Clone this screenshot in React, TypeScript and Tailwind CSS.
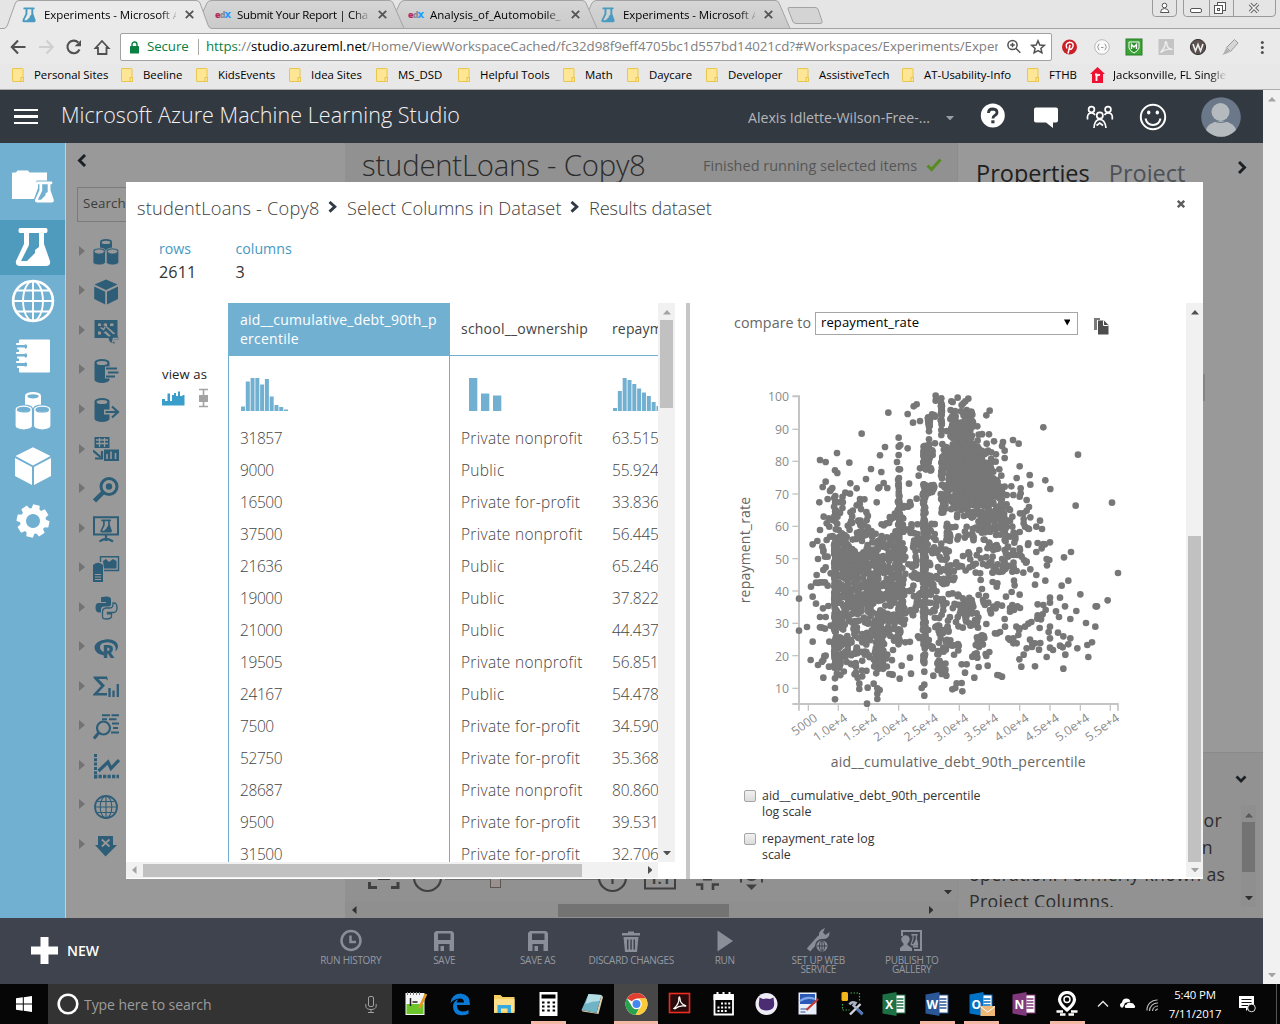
import React from "react";
import type { ReactNode } from "react";

type ArrowDir = "up" | "down" | "left" | "right";

const arrowPoints: Record<ArrowDir, string> = {
  up: "4,0 8,4.5 0,4.5",
  down: "0,0 8,0 4,4.5",
  left: "4.5,0 4.5,8 0,4",
  right: "0,0 4.5,4 0,8",
};

function Arrow({ dir, className }: { dir: ArrowDir; className: string }) {
  const vertical = dir === "up" || dir === "down";
  return (
    <svg width={vertical ? 8 : 4.5} height={vertical ? 4.5 : 8} className={"shrink-0 fill-current " + className}>
      <polygon points={arrowPoints[dir]} />
    </svg>
  );
}

function FlaskShape() {
  return (
    <path
      fillRule="evenodd"
      d="M5 0H31C33 0 33 5 31 5H29V16L35 33Q36 38 31 38H5Q0 38 1 33L9 16V5H5C3 5 3 0 5 0ZM14 5V17L6 33H12L20 25V22L24 19V5Z"
    />
  );
}

/* ---------- Browser chrome ---------- */

function TabFlask() {
  return (
    <svg width="14" height="16" viewBox="0 0 36 39" className="fill-[#4a9bc2]">
      <FlaskShape />
    </svg>
  );
}

function EdxMark() {
  return (
    <span className="flex w-4 text-[9px] leading-4 font-extrabold tracking-[-0.9px]">
      <span className="text-[#b52a67]">e</span>
      <span className="text-[#8a8d92]">d</span>
      <span className="text-[#1f9dff]">X</span>
    </span>
  );
}

const tabs = [
  { label: "Experiments - Microsoft A", icon: <TabFlask />, text: "tracking-[-0.08px]" },
  { label: "Submit Your Report | Cha", icon: <EdxMark />, text: "tracking-[-0.32px]" },
  { label: "Analysis_of_Automobile_I", icon: <EdxMark />, text: "tracking-[-0.02px]" },
  { label: "Experiments - Microsoft A", icon: <TabFlask />, text: "tracking-[-0.08px]" },
];

function TabStrip() {
  return (
    <div className="relative h-[29px] bg-[#e5e5e5]">
      <svg width="1280" height="29" className="absolute inset-0">
        <defs>
          <linearGradient id="tab" x1="0" y1="0" x2="0" y2="1">
            <stop offset="0" stopColor="#d6d6d6" />
            <stop offset="1" stopColor="#cacaca" />
          </linearGradient>
        </defs>
        <g fill="url(#tab)" stroke="#a3a3a3">
          <path d="M580 28.5L592 3Q593 .5 597 .5H775Q778 .5 779 3L790 28.5Z" />
          <path d="M388 28.5L400 3Q401 .5 405 .5H582Q585 .5 586 3L597 28.5Z" />
          <path d="M195 28.5L207 3Q208 .5 212 .5H389Q392 .5 393 3L404 28.5Z" />
          <path d="M789 7.500H815Q817 7.500 818 9L822 21Q823 23.500 820 23.500H797Q794 23.500 793 22L788 9Q788 7.500 789 7.500Z" fill="#d4d4d4" />
        </g>
        <path d="M0 28.500H1280" stroke="#a3a3a3" />
        <path d="M0 28.500H4Q6.500 28 7.500 25L15 4Q16 .5 19 .5H196Q199 .5 200 3L208 25Q209 28.500 212 28.500V29H0Z" fill="#eaeaea" />
        <path d="M0 28.500H4Q6.500 28 7.500 25L15 4Q16 .5 19 .5H196Q199 .5 200 3L208 25Q209 28.500 212 28.500" fill="none" stroke="#a3a3a3" />
      </svg>
      <div className="relative flex h-[29px] pl-[22px]">
        {tabs.map((t, i) => (
          <div key={i} className="flex w-[193px] items-center">
            <span className="flex w-[22px]">{t.icon}</span>
            <span
              className={
                "w-[132px] overflow-hidden text-[11.5px] whitespace-nowrap text-black [mask-image:linear-gradient(to_right,black_88%,transparent_102%)] " +
                t.text
              }
            >
              {t.label}
            </span>
            <svg width="9" height="9" viewBox="0 0 9 9" className="ml-[9px]" stroke="#555" strokeWidth="1.8">
              <path d="M.8 .8L8.200 8.200M8.200 .8L.8 8.200" />
            </svg>
          </div>
        ))}
      </div>
      <svg width="128" height="18" className="absolute top-0 right-0" fill="none" stroke="#9a9a9a">
        <path d="M.5 -1V13Q.5 16.500 3.500 16.500H21Q24.500 16.500 24.500 13V-1" />
        <path d="M31.500 -1V13Q31.500 16.500 34.500 16.500H120Q123.500 16.500 123.500 13V-1M57.500 0V16M81.500 0V16" />
        <g stroke="#555">
          <circle cx="12.500" cy="5.500" r="2.300" fill="#fff" />
          <path d="M8.500 12.500Q8.500 8.500 12.500 8.500T17 12.500Z" fill="#fff" />
          <rect x="38.500" y="8.500" width="11" height="4" rx="1.500" fill="#fff" />
          <rect x="65.500" y="2.500" width="8" height="8" fill="#fff" />
          <rect x="62.500" y="5.500" width="8" height="8" fill="#fff" />
          <rect x="65.500" y="8.500" width="2" height="2" />
          <path d="M98 4L106 12M106 4L98 12" strokeWidth="3.500" stroke="#666" />
          <path d="M98 4L106 12M106 4L98 12" strokeWidth="1.500" stroke="#f5f5f5" />
        </g>
      </svg>
    </div>
  );
}

function Toolbar() {
  return (
    <div className="flex h-[35px] items-center bg-[#eaeaea] pt-px">
      <svg width="120" height="28" viewBox="0 33 120 28" fill="none" strokeWidth="2.100" stroke="#505050">
        <path d="M25.500 47H12.500M18 40.500L11.800 47L18 53.500" />
        <path d="M39 47H52M46.500 40.500L52.700 47L46.500 53.500" stroke="#cfcfcf" />
        <path d="M79.500 49.500A6.300 6.300 0 1 1 78.300 42.500" />
        <path d="M81 40V46.300H74.700Z" fill="#505050" stroke="none" />
        <path d="M95.500 48L102 41L108.500 48H106.500V54H98V48Z" strokeWidth="1.800" />
      </svg>
      <div className="flex h-[28px] w-[932px] items-center rounded-[2px] border border-[#a2a2a2] bg-white">
        <svg width="9" height="13" className="ml-[9px]" fill="#0b8043">
          <rect x="0" y="5" width="9" height="7.500" rx=".6" />
          <path d="M2 5.500V3.500A2.500 2.500 0 0 1 7 3.500V5.500" fill="none" stroke="#0b8043" strokeWidth="1.400" />
        </svg>
        <span className="ml-[8px] w-[41px] text-[13.3px] tracking-[-0.1px] text-[#0b8043]">Secure</span>
        <span className="ml-[10px] h-4 w-px bg-[#a8a8a8]" />
        <span className="ml-[7px] w-[792px] overflow-hidden text-[13.3px] tracking-[-0.05px] whitespace-nowrap text-[#808080]">
          <span className="text-[#0b8043]">https</span>://<span className="text-black">studio.azureml.net</span>
          /Home/ViewWorkspaceCached/fc32d98f9eff4705bc1d557bd14021cd?#Workspaces/Experiments/Exper
        </span>
        <svg width="44" height="16" viewBox="0 0 44 16" className="ml-[8.500px]" fill="none" stroke="#505050" strokeWidth="1.500">
          <circle cx="5.500" cy="6" r="4.600" />
          <path d="M9 9.500L13.300 13.800M3.200 6H7.800M5.500 3.700V8.300" />
          <path d="M31 1.800L32.800 6L37.300 6.400L33.900 9.400L34.900 13.800L31 11.500L27.100 13.800L28.100 9.400L24.700 6.400L29.200 6Z" />
        </svg>
      </div>
      <svg width="228" height="28" viewBox="1052 33 228 28">
        <circle cx="1069.500" cy="47" r="7.500" fill="#cb2027" />
        <path d="M1068 53.500L1070 45M1067 48.500Q1064.500 43.500 1069.500 42.300Q1074 42.500 1073 46.500Q1071.500 50.500 1069.300 48.500" fill="none" stroke="#fff" strokeWidth="1.500" />
        <circle cx="1102" cy="47" r="7.300" fill="#fafafa" stroke="#b8b8b8" />
        <path d="M1099.500 44Q1098 44 1098.300 46L1097.500 47L1098.300 48Q1098 50 1099.500 50M1104.500 44Q1106 44 1105.700 46L1106.500 47L1105.700 48Q1106 50 1104.500 50M1101 47.500H1103.500" stroke="#999" fill="none" />
        <rect x="1126" y="39" width="16" height="16" fill="#3aa535" stroke="#2b7d2b" />
        <path d="M1129 42H1139V48Q1138 51 1134 53Q1130 51 1129 48Z" fill="#2c8f2c" stroke="#fff" />
        <path d="M1131.500 49V44.500L1134 47L1136.500 44.500V49" fill="none" stroke="#fff" strokeWidth="1.400" />
        <rect x="1158.500" y="39" width="15.500" height="16" fill="#c4c4c4" />
        <path d="M1160.500 52.500Q1165.500 47 1165.300 42.500Q1166.500 40.500 1166.800 43.500Q1166.500 48.500 1172.500 49.500Q1166.500 48 1160.500 52.500Z" fill="none" stroke="#f0f0f0" strokeWidth="1.300" />
        <circle cx="1198" cy="47" r="7.600" fill="#5a5150" stroke="#333" />
        <path d="M1193 44L1195.500 51L1198 44.500L1200.500 51L1203 44" fill="none" stroke="#eee" strokeWidth="1.600" />
        <path d="M1234.500 39.500L1238 43L1230.500 51.500L1226.500 47.500Z" fill="#d6d6d6" stroke="#999" />
        <path d="M1226 48L1230 52L1226.500 53.500L1222.500 55L1224.500 51.500Z" fill="#b0b0b0" />
        <g fill="#505050">
          <circle cx="1262.300" cy="42.500" r="1.500" />
          <circle cx="1262.300" cy="47.500" r="1.500" />
          <circle cx="1262.300" cy="52.500" r="1.500" />
        </g>
      </svg>
    </div>
  );
}

const bookmarks: [string, string][] = [
  ["Personal Sites", "w-[109px]"],
  ["Beeline", "w-[75px]"],
  ["KidsEvents", "w-[93px]"],
  ["Idea Sites", "w-[87px]"],
  ["MS_DSD", "w-[82px]"],
  ["Helpful Tools", "w-[105px]"],
  ["Math", "w-[64px]"],
  ["Daycare", "w-[79px]"],
  ["Developer", "w-[91px]"],
  ["AssistiveTech", "w-[105px]"],
  ["AT-Usability-Info", "w-[125px]"],
  ["FTHB", "w-[63px]"],
];

function Bookmarks() {
  return (
    <div className="flex h-[26px] items-center border-b border-[#acacac] bg-[#e8e8e8] pb-[3px] pl-[12px] text-[11.4px] whitespace-nowrap text-black">
      {bookmarks.map(([name, width]) => (
        <div key={name} className={"flex shrink-0 items-center gap-[10px] " + width}>
          <svg width="12" height="14">
            <rect x=".5" y=".5" width="10.500" height="13" rx=".5" fill="#ffe694" stroke="#e8c64f" />
            <rect x="9" y="9.500" width="2.500" height="4" fill="#ffe694" stroke="#e8c64f" />
          </svg>
          {name}
        </div>
      ))}
      <svg width="15" height="16" className="fill-[#ee1132]">
        <path d="M7.500 0L15 7H13V16H2V7H0Z" />
        <path d="M5 7.500H6.500V14M6.500 9.500Q7.500 7.500 10 8" fill="none" stroke="#fff" strokeWidth="1.800" />
      </svg>
      <span className="ml-[8px] w-[115px] overflow-hidden [mask-image:linear-gradient(to_right,black_85%,transparent_99%)]">
        Jacksonville, FL Single
      </span>
    </div>
  );
}

/* ---------- Studio header ---------- */

function StudioHeader() {
  return (
    <header className="flex h-[53px] items-center bg-[#333941] pl-[14px] whitespace-nowrap">
      <div className="flex w-[24px] flex-col gap-[4.500px]">
        <span className="h-[2.300px] bg-white" />
        <span className="h-[2.300px] bg-white" />
        <span className="h-[2.300px] bg-white" />
      </div>
      <h1 className="ml-[23px] w-[687px] pb-[3px] text-[21.500px] font-light tracking-[0.050px] text-[#f2f2f2]">
        Microsoft Azure Machine Learning Studio
      </h1>
      <span className="w-[198px] pt-[2px] text-[14.200px] tracking-[-0.020px] text-[#b3b6ba]">Alexis Idlette-Wilson-Free-...</span>
      <Arrow dir="down" className="mt-[3px] text-[#9a9da1]" />
      <svg width="290" height="44" viewBox="973 94 290 44" className="ml-auto" fill="none" stroke="#fff">
        <circle cx="992.800" cy="114.500" r="12" fill="#fff" stroke="none" />
        <path d="M988.500 112Q988.500 108 992.800 108Q997 108.200 997 111.500Q997 113.500 994.500 114.800Q993 115.700 993 117.500" stroke="#333941" strokeWidth="2.800" />
        <rect x="991.300" y="119.300" width="3.200" height="3" fill="#333941" stroke="none" />
        <path d="M1036 106.500H1056Q1058 106.500 1058 108.500V119.500Q1058 121.500 1056 121.500H1053V127L1046 121.500H1036Q1034 121.500 1034 119.500V108.500Q1034 106.500 1036 106.500Z" fill="#fff" stroke="none" />
        <g strokeWidth="1.700">
          <circle cx="1091.500" cy="108.500" r="2.900" />
          <circle cx="1108" cy="108.500" r="2.900" />
          <circle cx="1099.800" cy="114.500" r="3.100" />
          <path d="M1087.500 118.500V115.500Q1088 112 1091.500 112Q1094 112 1095 114M1112.300 118.500V115.500Q1112 112 1108 112Q1105.500 112 1104.500 114M1094 127Q1094.500 118.500 1099.800 118.500Q1105 118.500 1106 127" />
          <path d="M1096.500 124.500L1099.800 122L1103 124.500" />
        </g>
        <circle cx="1153" cy="116" r="12.200" strokeWidth="2" />
        <path d="M1145.500 117.500Q1147 124 1153 124Q1159 124 1160.500 117.500" strokeWidth="2" />
        <ellipse cx="1148.700" cy="111.500" rx="1.700" ry="2" fill="#fff" stroke="none" />
        <ellipse cx="1157.300" cy="111.500" rx="1.700" ry="2" fill="#fff" stroke="none" />
        <clipPath id="avatar">
          <circle cx="1221" cy="116" r="19.800" />
        </clipPath>
        <g clipPath="url(#avatar)" stroke="none">
          <rect x="1200" y="96" width="42" height="42" fill="#6a7889" />
          <circle cx="1220.500" cy="111" r="9" fill="#b5babf" />
          <ellipse cx="1221" cy="131.500" rx="15.500" ry="11.500" fill="#b5babf" />
          <path d="M1213 119Q1221 124 1228.500 119" stroke="#6a7889" strokeWidth="1.200" fill="none" />
        </g>
      </svg>
    </header>
  );
}

/* ---------- Left navigation ---------- */

function Drum({ x, y, w, h, hole }: { x: number; y: number; w: number; h: number; hole: string }) {
  const r = w / 2;
  const ry = r * 0.45;
  return (
    <g>
      <path d={`M${x} ${y + ry}A${r} ${ry} 0 0 1 ${x + w} ${y + ry}V${y + h - ry}A${r} ${ry} 0 0 1 ${x} ${y + h - ry}Z`} />
      <ellipse cx={x + r} cy={y + ry + 0.7} rx={r * 0.72} ry={ry * 0.6} fill={hole} />
    </g>
  );
}

function Globe({ size, stroke }: { size: number; stroke: number }) {
  return (
    <svg width={size} height={size} viewBox="0 0 42 42" fill="none" stroke="currentColor" strokeWidth={stroke}>
      <circle cx="21" cy="21" r="19" strokeWidth={stroke * 1.4} />
      <ellipse cx="21" cy="21" rx="9.500" ry="19" />
      <path d="M21 2V40M2 21H40M5.500 11H36.500M5.500 31H36.500" />
    </svg>
  );
}

const navBlue = "#72b0d2";

const navIcons: { name: string; box: string; icon: ReactNode }[] = [
  {
    name: "projects",
    box: "h-[77px] pt-[10px]",
    icon: (
      <svg width="44" height="34" className="fill-white">
        <path d="M1 3.500Q1 2.500 2 2.500H5L6.500 .5H17L18.500 2.500H36V10.500H25.500V13H27V18L23 29H1Z" />
        <g transform="translate(23.500 11.500) scale(.55)">
          <FlaskShape />
        </g>
      </svg>
    ),
  },
  {
    name: "experiments",
    box: "h-[55px] bg-[#4f9bbe]",
    icon: (
      <svg width="36" height="39" className="fill-white">
        <FlaskShape />
      </svg>
    ),
  },
  { name: "web services", box: "h-[52px]", icon: <Globe size={44} stroke={1.8} /> },
  {
    name: "notebooks",
    box: "h-[57px]",
    icon: (
      <svg width="36" height="34" className="fill-white">
        <rect x="4" y=".5" width="31" height="33" rx="1" />
        <g fill="none" stroke={navBlue} strokeWidth="4.500">
          <path d="M3 7.500H10M3 16.500H10M3 25.500H10" strokeLinecap="round" />
        </g>
        <g stroke="#fff" strokeWidth="2.200" strokeLinecap="round">
          <path d="M2 5H9M2 14H9M2 23H9M3 9.500H9M3 18.500H9M3 28H9" />
        </g>
      </svg>
    ),
  },
  {
    name: "datasets",
    box: "h-[54px]",
    icon: (
      <svg width="36" height="38" className="fill-white">
        <Drum x={10} y={0} w={16} h={18} hole={navBlue} />
        <g stroke={navBlue} strokeWidth="1.200">
          <Drum x={0} y={13} w={17.500} h={25} hole={navBlue} />
          <Drum x={18.500} y={13} w={17.500} h={25} hole={navBlue} />
        </g>
      </svg>
    ),
  },
  {
    name: "trained models",
    box: "h-[55px]",
    icon: (
      <svg width="36" height="38" className="fill-white">
        <path d="M18 .3L35.500 9L18 18.500L.5 9ZM0 11L17 20V38L0 29ZM36 11L19 20V38L36 29Z" />
      </svg>
    ),
  },
  {
    name: "settings",
    box: "h-[55px]",
    icon: (
      <svg width="34" height="34" viewBox="-17 -17 34 34" className="fill-white">
        {[0, 45, 90, 135, 180, 225, 270, 315].map((a) => (
          <path key={a} d="M-4.500 -9L-3.300 -16.300H3.300L4.500 -9Z" transform={`rotate(${a + 12})`} />
        ))}
        <path fillRule="evenodd" d="M0 -13A13 13 0 1 0 .01 -13ZM0 -7A7 7 0 1 1 -.01 -7Z" />
      </svg>
    ),
  },
];

function NavRail() {
  return (
    <nav className="flex w-[66px] shrink-0 flex-col border-r border-[#b7d3e2] bg-[#72b0d2] text-white">
      {navIcons.map((n) => (
        <div key={n.name} className={"flex shrink-0 items-center justify-center " + n.box}>
          {n.icon}
        </div>
      ))}
    </nav>
  );
}

/* ---------- Module palette ---------- */

const steel = "#2e5e77";
const dim = "#999999";

const paletteIcons: ReactNode[] = [
  <g>
    <Drum x={7} y={0} w={12} h={13} hole={dim} />
    <g stroke={dim} strokeWidth=".8">
      <Drum x={0} y={9} w={12.500} h={17} hole={dim} />
      <Drum x={13.300} y={9} w={12.500} h={17} hole={dim} />
    </g>
  </g>,
  <path d="M13 .5L24.500 5.500L13 11L1.500 5.500ZM1.200 7.500L12.200 12.800V25.500L1.200 20ZM25 7.500L14 12.800V25.500L25 20Z" />,
  <g>
    <path d="M1.500 2H24.500V20H1.500Z" />
    <path d="M5 5.500H8V8H5ZM11 5.500H14V8H11ZM17 5.500H20.500V8H17ZM5 13.500H8V16.500H5Z" fill={dim} />
    <path d="M9 8.500L20 18" stroke={dim} strokeWidth="6.500" />
    <path d="M9.500 8L20.500 18.500" stroke={steel} strokeWidth="3" />
    <circle cx="10" cy="11" r="3.300" />
    <path d="M7.500 9.500L10.500 11.500L12 9" stroke={dim} strokeWidth="1.500" fill="none" />
    <path d="M15.500 19Q15.500 25.500 22 25.500L20 21.500L25.500 21.500Q25.500 16.500 20.500 16Z" />
    <path d="M19.500 24.500L20.500 20.500L25 20.500" stroke={dim} strokeWidth="1.500" fill="none" />
  </g>,
  <g>
    <Drum x={1.500} y={1} w={15} h={24} hole={dim} />
    <path d="M12 10.500H24M12 14.500H26M12 18.500H22" stroke={dim} strokeWidth="4" />
    <path d="M13 10.500H24M15 14.500H25.500M13 18.500H22" stroke={steel} strokeWidth="2" />
  </g>,
  <g>
    <Drum x={1.500} y={1} w={15} h={24} hole={dim} />
    <path d="M11 15H24" stroke={dim} strokeWidth="5" />
    <path d="M12.500 15H24M19 9.500L25 15L19 20.500" stroke={steel} strokeWidth="2.200" fill="none" />
  </g>,
  <g>
    <path d="M1.500 0H16.500V11H1.500Z" />
    <path d="M3 3H15M3 6.500H15M6.500 1V10M11.500 1V10" stroke={dim} strokeWidth="1.300" />
    <path d="M0 13.500L7.500 20M9 14V21.500H2" stroke={steel} strokeWidth="2.200" fill="none" />
    <path d="M11 12.500H26V24H11Z" />
    <path d="M14 22V17M18 22V14.500M22.500 22V16" stroke={dim} strokeWidth="1.600" />
  </g>,
  <g>
    <circle cx="16" cy="9.500" r="8" fill="none" stroke={steel} strokeWidth="3" />
    <circle cx="16" cy="9.500" r="3.200" />
    <path d="M10 15.500L1.500 24" stroke={steel} strokeWidth="4.500" />
  </g>,
  <g>
    <path d="M1 1.200H25V18.500H1Z" fill="none" stroke={steel} strokeWidth="2" />
    <path d="M13 18V25M6.500 25.500Q13 20.500 20 25.500" stroke={steel} strokeWidth="2.200" fill="none" />
    <g transform="translate(7 3.500) scale(.34)">
      <FlaskShape />
    </g>
  </g>,
  <g>
    <path d="M7.500 6V.7H25.500V14.500H11" fill="none" stroke={steel} strokeWidth="1.400" />
    <path d="M10 5L13 3L16 6L20 3L23.500 5V12.500H11Z" />
    <path d="M0 9Q5 4.500 10 9V26H0Z" />
    <path d="M2 18.500H8M2 21H8M2 23.500H8" stroke={dim} strokeWidth="1.100" />
  </g>,
  <g>
    <path d="M8 3Q8 1.500 13 1.500Q18 1.500 18 4V9Q18 11.500 15 11.500H11Q8 11.500 8 14.500V17.500H5.500Q2.500 17 2.500 12.500T5.500 8H13V7H8Z" />
    <path d="M20 8H22Q24 9 24 13T21 17.500H14.500V18.800H18.500V21.500Q18 24 13.500 24T9.500 21.500V17Q9.500 13.500 13 13H16.500Q20 13 20 9.500Z" fill="none" stroke={steel} strokeWidth="1.300" />
  </g>,
  <g>
    <path fillRule="evenodd" d="M12.500 4.500C19 3.500 25 6.500 25 11.500Q25 14.500 22.500 16.500Q24 7.500 14.500 7.200Q7 7.500 7 12Q7 15.500 11 17V20.500Q1.500 18.500 1.500 12.500Q2 6 12.500 4.500Z" />
    <text x="9.500" y="22.500" fontSize="17" fontWeight="800" fontFamily="Open Sans">R</text>
  </g>,
  <g>
    <path d="M.5 2.500H14L15 6.500L13 5H5.500L12 11.500L5 19H14V21.500H0V20.500L8 12L.5 4Z" />
    <path d="M16.500 14V23M20.500 16.500V23M24.800 10V23" stroke={steel} strokeWidth="2.300" />
  </g>,
  <g>
    <circle cx="10.500" cy="14" r="6.500" fill="none" stroke={steel} strokeWidth="2.200" />
    <path d="M6 18.500L1 24.500" stroke={steel} strokeWidth="3" />
    <path d="M9 1.300H17M18.500 1.300H26M9 5.200H14M16 5.200H23.500M19 9.500H26M20 14H25M18 18.500H26" stroke={steel} strokeWidth="1.900" />
  </g>,
  <g>
    <path d="M2.500 1V26" stroke={steel} strokeWidth="3" strokeDasharray="3 1.300" />
    <path d="M1 23.500H26" stroke={steel} strokeWidth="3.500" strokeDasharray="3.300 1.200" />
    <path d="M5.500 18L15 9L18 15.500L26 7" stroke={steel} strokeWidth="3.200" fill="none" />
  </g>,
  <g fill="none" stroke={steel} strokeWidth="1.100">
    <circle cx="13" cy="14" r="11" strokeWidth="1.800" />
    <ellipse cx="13" cy="14" rx="5.800" ry="11" />
    <path d="M13 3V25M2 14H24M4.500 8.500H21.500M4.500 19.500H21.500" />
  </g>,
  <g>
    <path d="M5 4H20V13H24L12.500 24.500L2 13H5Z" />
    <path d="M8.800 7.500L16.500 14.500M16.500 7.500L8.800 14.500" stroke={dim} strokeWidth="1.700" />
  </g>,
];

function Palette() {
  return (
    <aside className="flex w-[279px] shrink-0 flex-col bg-[#999999]">
      <div className="flex h-[44px] pt-[11px] pl-[11px]">
        <svg width="10" height="13" fill="none" stroke="#1b2025" strokeWidth="2.900">
          <path d="M8 1L2.500 6.500L8 12" />
        </svg>
      </div>
      <div className="ml-[11px] flex h-[35px] w-[240px] items-center border border-[#7b7b7b] pb-[2px] pl-[5px] text-[13.300px] tracking-[0.100px] text-[#3c3c3c]">
        Search
      </div>
      <div className="mt-[11px] flex flex-col">
        {paletteIcons.map((icon, i) => (
          <div key={i} className="flex h-[39.550px] items-center pl-[13px]">
            <svg width="6" height="10" className="mb-[4px] fill-[#737373]">
              <path d="M0 0L6 5L0 10Z" />
            </svg>
            <svg width="27" height="27" className="ml-[8px] fill-[#2e5e77]">
              {icon}
            </svg>
          </div>
        ))}
      </div>
    </aside>
  );
}

/* ---------- Canvas and properties behind the dialog ---------- */

function ExperimentCanvas() {
  return (
    <main className="flex w-[612px] shrink-0 flex-col bg-[#919191]">
      <div className="flex h-[46px] items-center pl-[17px] whitespace-nowrap">
        <span className="w-[341px] text-[29.300px] font-light tracking-[-0.200px] text-[#2b2b2b]">studentLoans - Copy8</span>
        <span className="w-[223px] text-[14.500px] text-[#565656]">Finished running selected items</span>
        <svg width="16" height="14" className="mb-[2px]" fill="none" stroke="#588b20" strokeWidth="3">
          <path d="M1.500 7.500L5.500 11.500L14.500 1.500" />
        </svg>
      </div>
      <div className="mt-auto flex h-[39px] items-end justify-between pr-[5px]">
        <svg width="440" height="36" viewBox="345 866 440 36" fill="none" stroke="#404040">
          <path d="M369.500 882V887.500H377M391 887.500H398V882" strokeWidth="3" />
          <rect x="378" y="870" width="12" height="10" fill="#404040" stroke="none" />
          <circle cx="427.500" cy="877.500" r="13.500" strokeWidth="2.200" />
          <path d="M445 879.500H600" stroke="#6f6f6f" />
          <rect x="490.500" y="868" width="10" height="19.500" fill="#97928f" stroke="#5c5650" />
          <circle cx="612.500" cy="877.500" r="13.500" strokeWidth="2.200" />
          <path d="M612.500 870V884" strokeWidth="2.200" />
          <path d="M645 868V888.500H675V868" strokeWidth="2" />
          <text x="649" y="884" fontSize="15" fontWeight="700" fill="#404040" stroke="none">1:1</text>
          <path d="M696 884.500H702V890M719 884.500H713V890" strokeWidth="2.600" />
          <rect x="703" y="870" width="9" height="10.500" fill="#404040" stroke="none" />
          <path d="M741 879V882.500M762 879V882.500" strokeWidth="2" />
          <circle cx="751.500" cy="874" r="6" strokeWidth="2" />
          <path d="M746 884.500H757L751.500 890Z" fill="#404040" stroke="none" />
        </svg>
        <Arrow dir="down" className="mb-[8px] text-[#303030]" />
      </div>
      <div className="flex h-[16px] items-center bg-[#8f8f8f] pr-[24px] pl-[7px]">
        <Arrow dir="left" className="text-[#303030]" />
        <div className="ml-[201px] h-[13px] w-[171px] bg-[#737373]" />
        <Arrow dir="right" className="ml-auto text-[#303030]" />
      </div>
    </main>
  );
}

function PropertiesPanel() {
  return (
    <aside className="flex min-w-0 flex-1 flex-col border-l border-[#8d8d8d] bg-[#999999]">
      <div className="flex h-[60px] items-center justify-between pr-[16px] pl-[18px]">
        <div className="flex gap-[19px] pt-[2px] text-[23.500px] whitespace-nowrap">
          <span className="text-[#202020]">Properties</span>
          <span className="text-[#4c5157]">Project</span>
        </div>
        <svg width="9" height="13" className="mb-[11px]" fill="none" stroke="#1b2025" strokeWidth="2.900">
          <path d="M1 1L6.500 6.500L1 12" />
        </svg>
      </div>
      <div className="mt-[171px] mr-[58px] h-[27px] self-end bg-[#868686] pr-[2px]">
        <div className="h-full w-px bg-[#777]" />
      </div>
      <div className="mt-auto flex h-[166px] flex-col border-t border-[#8a8a8a] bg-[#929292] pb-[9px]">
        <div className="flex h-[52px] items-center justify-end pr-[16px] pb-px">
          <svg width="12" height="8" fill="none" stroke="#1b2025" strokeWidth="2.700">
            <path d="M1.500 1.500L6 6L10.500 1.500" />
          </svg>
        </div>
        <div className="flex h-[102px] items-start justify-between">
          <p className="mt-[2px] h-[100px] w-[272px] overflow-hidden pl-[11px] text-[17.700px] leading-[27px] tracking-[0.350px] whitespace-nowrap text-[#2d2d2d]">
            <span className="block w-[253px] text-right">Selects columns to include or</span>
            <span className="block w-[244px] text-right">exclude from a dataset in an</span>
            operation. Formerly known as
            <br />
            Project Columns.
          </p>
          <div className="mr-[7px] flex h-full w-[15px] flex-col items-center bg-[#8f8f8f] pt-[8px] pb-[7px]">
            <Arrow dir="up" className="text-[#595959]" />
            <div className="mt-[4px] h-[50px] w-[13px] bg-[#737373]" />
            <Arrow dir="down" className="mt-auto text-[#303030]" />
          </div>
        </div>
      </div>
    </aside>
  );
}

/* ---------- Results dialog ---------- */

const rows: [string, string, string][] = [
  ["31857", "Private nonprofit", "63.515"],
  ["9000", "Public", "55.924"],
  ["16500", "Private for-profit", "33.836"],
  ["37500", "Private nonprofit", "56.445"],
  ["21636", "Public", "65.246"],
  ["19000", "Public", "37.822"],
  ["21000", "Public", "44.437"],
  ["19505", "Private nonprofit", "56.851"],
  ["24167", "Public", "54.478"],
  ["7500", "Private for-profit", "34.590"],
  ["52750", "Private for-profit", "35.368"],
  ["28687", "Private nonprofit", "80.860"],
  ["9500", "Private for-profit", "39.531"],
  ["31500", "Private for-profit", "32.706"],
];

function Histogram({ heights, bar, step }: { heights: number[]; bar: number; step: number }) {
  return (
    <svg width={step * heights.length} height="33" className="fill-[#72b0d2]">
      {heights.map((h, i) => (
        <rect key={i} x={i * step} y={33 - h} width={bar} height={h} />
      ))}
    </svg>
  );
}

function DataTable() {
  return (
    <div className="flex w-[430px] overflow-hidden text-[15.500px] whitespace-nowrap text-[#444]">
      <div className="w-[222px] shrink-0 border-x border-[#72b0d2]">
        <div className="-mx-px h-[53px] bg-[#72b0d2] pt-[7px] pl-[12px] text-[14px] leading-[19px] tracking-[0.240px] text-white">
          aid__cumulative_debt_90th_p
          <br />
          ercentile
        </div>
        <div className="h-[66px] pt-[22px] pl-[12px]">
          <Histogram heights={[4.5, 29.5, 33, 33, 26.5, 32, 14.5, 6, 4, 1.5]} bar={4} step={4.78} />
        </div>
        {rows.map((r, i) => (
          <div key={i} className="h-[32px] pl-[11px] leading-[32px] font-light tracking-[-0.400px]">
            {r[0]}
          </div>
        ))}
      </div>
      <div className="w-[151px] shrink-0">
        <div className="h-[53px] border-b border-[#72b0d2] pl-[11px] text-[14px] leading-[52px] tracking-[0.220px]">school__ownership</div>
        <div className="h-[66px] pt-[22px] pl-[19px]">
          <Histogram heights={[33, 17.5, 15.5]} bar={8.300} step={12} />
        </div>
        {rows.map((r, i) => (
          <div key={i} className="h-[32px] pl-[11px] leading-[32px] font-light tracking-[0.290px]">
            {r[1]}
          </div>
        ))}
      </div>
      <div className="w-[151px] shrink-0">
        <div className="h-[53px] border-b border-[#72b0d2] pl-[11px] text-[14px] leading-[52px] tracking-[0.150px]">repayment_rate</div>
        <div className="h-[66px] pt-[22px] pl-[12px]">
          <Histogram heights={[3, 20, 33, 31, 27, 22.500, 18.500, 15, 9, 5]} bar={4} step={4.83} />
        </div>
        {rows.map((r, i) => (
          <div key={i} className="h-[32px] pl-[11px] leading-[32px] font-light tracking-[-0.200px]">
            {r[2]}
          </div>
        ))}
      </div>
    </div>
  );
}

/* Individual observations away from the dense groups, in plot units. */
const sparse: number[] = [
  629,92,619,106,627,163,642,184,699,180,716,191,669,186,666,198,674,212,674,234,620,191,634,217,648,223,647,245,658,268,664,287,
  790,142,894,224,749,285,719,259,710,294,796,301,811,327,751,314,722,325,722,340,719,350,887,377,996,368,740,360,747,381,740,392,751,412,780,422,
  786,447,769,440,743,445,730,400,720,400,719,456,735,440,747,447,731,417,731,430,810,487,873,516,852,532,795,493,773,489,785,505,790,492,769,516,800,537,808,540,801,556,1014,579,
  769,585,765,614,796,602,865,602,845,617,751,568,730,578,719,644,695,636,704,616,702,602,901,643,983,661,840,653,810,653,855,679,
  828,694,837,711,871,717,889,693,947,679,951,679,918,729,946,740,936,787,922,795,925,831,892,805,871,775,850,769,834,758,856,824,
  850,866,819,810,800,831,777,809,781,789,765,859,731,824,718,838,724,860,720,684,797,690,790,675,773,673,810,668,779,744,810,740,806,756,
  810,775,810,803,754,726,745,731,735,740,709,740,719,745,865,793,840,797,848,802,756,801,740,805,757,790,750,779,765,790,715,765,717,750,700,790,710,790,685,775,
  690,780,700,775,773,706,788,703,783,718,772,716,782,708,712,679,697,675,690,695,690,684,674,717,675,740,660,756,645,760,652,760,652,885,666,890,657,886,
  623,857,596,861,583,893,628,816,619,828,617,822,592,833,584,822,577,830,590,820,547,934,545,909,530,910,517,928,526,924,545,853,560,853,555,878,
  433,947,433,914,425,924,433,875,393,881,390,833,460,887,499,887,359,896,334,883,328,882,338,884,365,857,339,810,261,971,292,957,292,941,
  299,930,292,925,281,911,263,923,238,927,238,911,233,893,165,924,165,958,165,895,130,893,147,860,114,855,92,840,133,828,137,827,126,845,130,840,98,785,81,741,
  57,752,57,656,93,620,98,650,108,671,129,685,145,678,120,711,137,711,120,742,126,743,135,746,148,785,152,737,110,585,108,608,114,609,120,607,114,537,98,493,112,483,120,450,
  131,410,118,367,128,321,137,305,143,357,150,333,157,324,152,330,120,240,137,246,165,271,172,279,171,219,208,248,245,161,325,98,399,128,
  383,102,401,79,410,73,420,123,383,205,356,173,356,200,361,195,356,225,351,246,360,268,356,268,315,201,300,226,273,267,304,276,258,297,
  311,309,322,324,295,325,298,322,211,310,230,325,210,341,196,338,240,357,230,376,387,311,416,287,420,265,410,356,390,366,385,380,378,380,392,375,467,47,467,62,
  484,55,484,70,533,53,514,64,518,66,565,56,556,64,550,70,545,75,560,90,575,97,577,104,573,95,556,113,548,128,456,103,465,110,462,105,592,139,447,154,447,178,465,190,
  500,153,484,150,484,165,127,500,130,515,135,530,143,530,130,510,137,562,130,570,152,580,143,617,128,607,135,607,148,440,140,430,146,415,157,420,140,480,150,470,158,468,
  702,690,720,525,725,530,740,545,732,540,744,495,745,490,719,505,720,510,738,548,706,470,703,488,706,478,697,560,697,575,703,570,710,573,675,567,647,568,
  674,320,694,319,700,345,680,345,672,400,690,390,697,410,690,423,697,440,680,440,672,455,660,440,674,480,690,470,684,500,674,510,684,530,674,545,700,512,710,525,
  630,265,640,275,650,300,660,320,668,340,655,330,645,310,640,295,650,350,665,370,678,380,660,395,650,380,640,420,655,410,630,450,648,465,625,440,
  628,490,640,510,638,530,628,549,640,560,650,495,668,560,
  596,645,618,648,609,660,652,673,640,680,630,690,678,650,666,677,619,732,594,743,606,627,602,600,638,606,652,610,650,620,615,675,625,668,633,700,
  647,685,611,668,575,660,570,675,580,680,590,700,595,712,560,705,570,690,555,690,548,655,560,665,575,700,590,730,585,720,
];

function buildPoints(): [number, number][] {
  let seed = 20177;
  const rnd = () => {
    seed = (seed * 16807) % 2147483647;
    return seed / 2147483647;
  };
  const gauss = () => Math.sqrt(-2 * Math.log(rnd())) * Math.cos(6.28318 * rnd());
  const pts: [number, number][] = [];
  for (let i = 0; i < sparse.length; i += 2) pts.push([sparse[i], sparse[i + 1]]);

  const fill = (n: number, make: () => [number, number], keep: (x: number, y: number) => boolean) => {
    let made = 0;
    let guard = 0;
    while (made < n && guard++ < 20000) {
      const [x, y] = make();
      if (keep(x, y)) {
        pts.push([x, y]);
        made++;
      }
    }
  };
  const column = (n: number, x: number, y0: number, y1: number, w: number) =>
    fill(n, () => [x + (rnd() - 0.5) * w, y0 + rnd() * (y1 - y0)], () => true);

  fill(590, () => [162 + rnd() * 215, 600 + gauss() * 125], (x, y) => y > 350 && y < 862 && (x < 340 || y < 790));
  fill(120, () => [180 + rnd() * 180, 600 + gauss() * 75], (_x, y) => y > 490 && y < 740);
  fill(60, () => [170 + rnd() * 90, 760 + rnd() * 130], (_x, y) => y < 892);
  fill(36, () => [385 + rnd() * 40, 430 + rnd() * 170], () => true);
  fill(26, () => [385 + rnd() * 40, 600 + rnd() * 190], () => true);
  column(100, 165, 490, 868, 5);
  column(14, 165, 345, 490, 6);
  column(180, 433, 312, 800, 9);
  column(46, 434, 196, 275, 9);
  column(10, 433, 800, 850, 6);
  column(24, 447, 112, 140, 6);
  column(22, 450, 190, 275, 16);
  column(14, 452, 315, 340, 22);
  column(60, 357, 292, 795, 6);
  column(50, 298, 745, 882, 24);
  column(20, 484, 75, 135, 4);
  column(24, 486, 180, 400, 8);
  fill(
    540,
    () => {
      const y = 275 + gauss() * 105;
      return [548 + (y - 200) * 0.27 + gauss() * (22 + Math.max(0, y - 80) * 0.11), y];
    },
    (x, y) => y > 80 && y < 470 && x > 500 && x < 690 && x < 588 + (y - 100) * 0.36 && x > 510 + (y > 390 ? (y - 390) * 0.5 : 0),
  );
  fill(50, () => [486 + rnd() * 45, 200 + rnd() * 190], () => true);
  fill(50, () => [495 + rnd() * 130, 220 + rnd() * 160], (x, y) => x < 590 + (y - 200) * 0.3);
  fill(40, () => [545 + rnd() * 138, 340 + rnd() * 125], (x, y) => x < 588 + (y - 100) * 0.36);
  fill(66, () => [440 + rnd() * 75, 400 + rnd() * 270], () => true);
  fill(76, () => [500 + rnd() * 205, 440 + rnd() * 150], (x, y) => y < 640 - (x - 500) * 0.35);
  fill(66, () => [445 + rnd() * 150, 590 + rnd() * 150], (x, y) => !(x > 545 && y < 640));
  fill(36, () => [440 + rnd() * 110, 735 + rnd() * 95], () => true);
  fill(16, () => [470 + rnd() * 28, 840 + rnd() * 42], () => true);
  fill(12, () => [585 + rnd() * 30, 765 + rnd() * 45], () => true);
  return pts;
}

const points = buildPoints();
const yTicks = [48, 148, 244, 342, 439, 536, 633, 730, 827, 925];
const xTicks = [85, 175, 265, 356, 447, 538, 628, 719, 810, 901, 991];
const xLabels = ["5000", "1.0e+4", "1.5e+4", "2.0e+4", "2.5e+4", "3.0e+4", "3.5e+4", "4.0e+4", "4.5e+4", "5.0e+4", "5.5e+4"];

function ScatterPlot() {
  return (
    <svg width="400" height="395" className="font-['Open_Sans',sans-serif]">
      <g transform="translate(50 0) scale(.33333)" stroke="#c4c4c4" fill="none">
        <path d="M37 49H57V971M37 972H1014" strokeWidth="6" />
        <path d="M57 972V992M1014 969V992" strokeWidth="5" />
        {yTicks.slice(1).map((y) => (
          <path key={y} d={`M37 ${y}H57`} strokeWidth="4" />
        ))}
        {xTicks.map((x) => (
          <path key={x} d={`M${x} 972V992`} strokeWidth="4" />
        ))}
        <g fill="#777777" stroke="none">
          {points.map(([x, y], i) => (
            <circle key={i} cx={x} cy={y} r="10" />
          ))}
        </g>
      </g>
      <g fill="#8a8a8a" fontSize="12.300" textAnchor="end">
        {yTicks.map((y, i) => (
          <text key={y} x="59" y={y / 3 + 5}>
            {100 - i * 10}
          </text>
        ))}
        {xTicks.map((x, i) => (
          <text key={x} transform={`translate(${x / 3 + 60} 340) rotate(-35)`}>
            {xLabels[i]}
          </text>
        ))}
      </g>
      <g fill="#666" fontSize="14" textAnchor="middle">
        <text x="228.300" y="387" className="tracking-[0.230px]">
          aid__cumulative_debt_90th_percentile
        </text>
        <text transform="translate(19.500 170) rotate(-90)" className="tracking-[0.200px]">
          repayment_rate
        </text>
      </g>
    </svg>
  );
}

function Checkbox() {
  return <span className="mt-[2px] size-[12px] shrink-0 rounded-[2px] border border-[#a5a5a5] bg-linear-to-b from-[#f1f1f1] to-[#dcdcdc]" />;
}

function ComparePane() {
  return (
    <div className="flex min-w-0 flex-1 flex-col">
      <div className="flex h-[40px] items-center pl-[44.500px]">
        <span className="w-[81px] text-[14.300px] tracking-[0.050px] whitespace-nowrap text-[#666]">compare to</span>
        <div className="flex h-[23px] w-[263px] items-center justify-between border border-[#a6a6a6] pr-[7px] pl-[5px] text-[13px] tracking-[0.120px] text-black">
          repayment_rate
          <svg width="6.500" height="7" className="mb-[2px]">
            <path d="M0 .5H6.500L3.250 6.500Z" />
          </svg>
        </div>
        <svg width="15" height="18" className="mt-[6px] ml-[16px]">
          <path d="M0 1H6V3H3V13H0Z" fill="#7a7a7a" />
          <path d="M4 3.500H10L14.500 8V17.500H4Z" fill="#4d4d4d" />
          <path d="M9.500 3.500V8.500H14.500" fill="none" stroke="#fff" />
        </svg>
      </div>
      <div className="mt-[37px] flex h-[395px] pl-[40.500px]">
        <ScatterPlot />
      </div>
      <div className="flex flex-col gap-[11px] pt-[13px] pl-[54.500px] text-[12.400px] leading-[16px] text-[#333]">
        <label className="flex gap-[6px]">
          <Checkbox />
          <span>
            aid__cumulative_debt_90th_percentile
            <br />
            log scale
          </span>
        </label>
        <label className="flex gap-[6px]">
          <Checkbox />
          <span>
            repayment_rate log
            <br />
            scale
          </span>
        </label>
      </div>
    </div>
  );
}

function CrumbArrow() {
  return (
    <svg width="10" height="12" className="mt-[-3px] mr-[9px] ml-[8px]" fill="none" stroke="#303a42" strokeWidth="2.900">
      <path d="M1.500 1L6.800 5.800L1.500 10.600" />
    </svg>
  );
}

function ResultsDialog() {
  return (
    <section className="absolute top-[92px] left-[126px] flex h-[697px] w-[1077px] flex-col bg-white">
      <div className="flex h-[53px] items-center justify-between pr-[18px] pl-[11px] text-[18.200px] font-light whitespace-nowrap text-[#3c3c3c]">
        <div className="flex items-center">
          <span className="w-[183px] tracking-[0.200px]">studentLoans - Copy8</span>
          <CrumbArrow />
          <span className="w-[215px] tracking-[0.080px]">Select Columns in Dataset</span>
          <CrumbArrow />
          <span className="tracking-[-0.100px]">Results dataset</span>
        </div>
        <svg width="8" height="8" className="mb-[9px]" stroke="#5c5c5c" strokeWidth="2.300">
          <path d="M.8 .8L7.200 7.200M7.200 .8L.8 7.200" />
        </svg>
      </div>
      <div className="flex h-[68px] pt-[3px] pl-[33px]">
        <dl className="w-[76.500px]">
          <dt className="text-[14.200px] leading-[22px] text-[#4699c4]">rows</dt>
          <dd className="text-[16.200px] leading-[24px] tracking-[0.100px] text-[#333]">2611</dd>
        </dl>
        <dl>
          <dt className="text-[14.200px] leading-[22px] text-[#4699c4]">columns</dt>
          <dd className="text-[16.200px] leading-[24px] text-[#333]">3</dd>
        </dl>
      </div>
      <div className="flex h-[576px]">
        <div className="flex w-[549px] flex-col">
          <div className="flex h-[559px] overflow-hidden">
            <div className="w-[102px] pt-[61px] pl-[36px] text-[13.100px] leading-[20px] tracking-[0.120px] text-[#222]">
              view as
              <svg width="48" height="20" viewBox="162 388 48 20" className="mt-[4px]">
                <path d="M162 405.500V399H165V401H167.500V393.500H170V401H172V395H174V393H176V396H178V391.500H180V396H182.500V395H184.500V405.500Z" fill="#3a9ecb" />
                <path d="M199 389.500H208M199 406.500H208M203.500 389V407" stroke="#a3a3a3" strokeWidth="1.600" />
                <rect x="199" y="395" width="9" height="7" fill="#a3a3a3" />
              </svg>
            </div>
            <DataTable />
            <div className="flex w-[17px] flex-col items-center bg-[#f1f1f1] py-[7px]">
              <Arrow dir="up" className="text-[#a3a3a3]" />
              <div className="mt-[5.500px] h-[88px] w-[13px] bg-[#c1c1c1]" />
              <Arrow dir="down" className="mt-auto text-[#505050]" />
            </div>
          </div>
          <div className="flex h-[16px]">
            <div className="flex w-[532px] items-center bg-[#f1f1f1] pr-[6px] pl-[6px]">
              <Arrow dir="left" className="text-[#a3a3a3]" />
              <div className="ml-[6px] h-[13px] w-[439px] bg-[#c1c1c1]" />
              <Arrow dir="right" className="ml-auto text-[#505050]" />
            </div>
          </div>
        </div>
        <div className="ml-[11px] w-[3.500px] bg-[#c6c6c6]" />
        <ComparePane />
        <div className="mb-[2px] flex w-[17px] flex-col items-center bg-[#f1f1f1] pt-[7px] pb-[5px]">
          <Arrow dir="up" className="text-[#505050]" />
          <div className="mt-auto h-[326px] w-[13px] bg-[#c1c1c1]" />
          <Arrow dir="down" className="mt-[5.500px] text-[#a3a3a3]" />
        </div>
      </div>
    </section>
  );
}

/* ---------- Command bar ---------- */

const saveIcon = (
  <path fillRule="evenodd" d="M3 2H19L21 4V22H1V4ZM5 4.500V11H17.500V4.500ZM5.500 15V22H16.500V15ZM7.500 17H11V22H7.500Z" />
);

const commands: { label: ReactNode; icon: ReactNode }[] = [
  {
    label: "RUN HISTORY",
    icon: (
      <g fill="none" stroke="#898e97">
        <circle cx="11" cy="11.500" r="9.500" strokeWidth="2.500" />
        <path d="M10.500 6.500V13H16" strokeWidth="2.500" />
      </g>
    ),
  },
  { label: "SAVE", icon: saveIcon },
  { label: "SAVE AS", icon: saveIcon },
  {
    label: "DISCARD CHANGES",
    icon: (
      <path fillRule="evenodd" d="M8 2.500H14V4H20V6.500H2V4H8ZM3.500 8H18.500L17 23H5ZM7 10.500V20.500H8.500V10.500ZM10.300 10.500V20.500H11.800V10.500ZM13.500 10.500V20.500H15V10.500Z" />
    ),
  },
  { label: "RUN", icon: <path d="M3.500 1.500L19 12L3.500 22.500Z" /> },
  {
    label: (
      <>
        SET UP WEB
        <br />
        SERVICE
      </>
    ),
    icon: (
      <g fill="none" stroke="#898e97">
        <path d="M1.500 21L13 8" strokeWidth="4.500" />
        <path d="M12 8Q11 1.500 18 -1L16 3.500L18.500 6L22.500 3Q23 11 14 10Z" fill="#898e97" stroke="none" />
        <circle cx="15" cy="17" r="6.300" fill="#898e97" stroke="#3e434e" strokeWidth="1.500" />
        <path d="M15 12V22M10 17H20" stroke="#3e434e" />
        <ellipse cx="15" cy="17" rx="2.500" ry="5" stroke="#3e434e" />
      </g>
    ),
  },
  {
    label: (
      <>
        PUBLISH TO
        <br />
        GALLERY
      </>
    ),
    icon: (
      <g>
        <path d="M1 7V2H20V21H13" fill="none" stroke="#898e97" strokeWidth="2" />
        <g transform="translate(9.500 5) scale(.22 .3)">
          <FlaskShape />
        </g>
        <circle cx="4.500" cy="10.500" r="4.200" />
        <path d="M-1 22V19L2.500 16V13H6.500V16L11 19V22Z" />
        <path d="M12 17.500H17" stroke="#898e97" strokeWidth="2" />
      </g>
    ),
  },
];

function CommandBar() {
  return (
    <footer className="flex h-[66px] shrink-0 bg-[#3e434e]">
      <div className="flex w-[304px] items-center gap-[9px] pb-px pl-[31px] text-[14px] font-semibold text-white">
        <svg width="27" height="27" className="fill-white">
          <path d="M9.500 0H17.500V9.500H27V17.500H17.500V27H9.500V17.500H0V9.500H9.500Z" />
        </svg>
        NEW
      </div>
      {commands.map((c, i) => (
        <div key={i} className="flex w-[93.500px] flex-col items-center pt-[10px] text-center text-[10px] leading-[9px] tracking-[-0.3px] whitespace-nowrap text-[#959aa2]">
          <svg width="24" height="24" viewBox="-1 -1 24 24" className="mb-[4px] shrink-0 fill-[#898e97]">
            {c.icon}
          </svg>
          <span>{c.label}</span>
        </div>
      ))}
    </footer>
  );
}

/* ---------- Windows taskbar ---------- */

function OfficeIcon({ letter, fill }: { letter: string; fill: string }) {
  return (
    <g>
      <rect x="13" y="4" width="10.500" height="18" fill="#fff" stroke={fill} />
      <path d="M15 8H22M15 11H22M15 14H22M15 17H22" stroke={fill} strokeWidth="1.400" />
      <path d="M1 3.500L15 1V25L1 22.500Z" fill={fill} />
      <text x="7.800" y="17.500" fontSize="12" fontWeight="700" fill="#fff" textAnchor="middle">{letter}</text>
    </g>
  );
}

const apps: { name: string; width: string; state: string; icon: ReactNode }[] = [
  {
    name: "notepad++",
    width: "w-[46px]",
    state: "",
    icon: (
      <g>
        <rect x="3" y="2" width="19" height="22" fill="#f4f4f4" />
        <rect x="4" y="13" width="17" height="10" fill="#6cc52a" />
        <path d="M5 1V4M8 1V4M11 1V4M14 1V4M17 1V4" stroke="#777" />
        <path d="M8 7V15M10 11H15" stroke="#222" strokeWidth="1.500" />
        <path d="M23.500 3L17 17" stroke="#e39a22" strokeWidth="2.800" />
      </g>
    ),
  },
  {
    name: "edge",
    width: "w-[44px]",
    state: "",
    icon: <path d="M3 12Q4 3 13 2.500Q22.500 3 22.500 14H9.500Q9.500 20 15 20.500Q18.500 20.500 21 19V23Q17 24.500 13.500 24.300Q5.500 23.500 5.500 15Q6 10 11 8Q9.300 9.500 9.300 11.500H16.500Q16.500 7.500 12.500 7.500Q7 7.500 3 12Z" fill="#0b7ad6" />,
  },
  {
    name: "explorer",
    width: "w-[44px]",
    state: "",
    icon: (
      <g>
        <path d="M2.500 4H9L11 6H23V22H2.500Z" fill="#f7ce60" />
        <rect x="2.500" y="8" width="20.500" height="12.500" fill="#fde08c" />
        <path d="M6 22V14H19.500V22H16V17.500H9.500V22Z" fill="#35a9e0" />
      </g>
    ),
  },
  {
    name: "calculator",
    width: "w-[44px]",
    state: "line",
    icon: (
      <g>
        <rect x="4" y="1" width="18" height="24" fill="#fff" />
        <rect x="6" y="3.500" width="14" height="4" fill="#000" />
        <path d="M6.500 11.500H20M6.500 15.500H20M6.500 19.500H20" stroke="#000" strokeWidth="2.200" strokeDasharray="2.500 2.800" />
      </g>
    ),
  },
  {
    name: "notes",
    width: "w-[44px]",
    state: "",
    icon: (
      <g>
        <path d="M9 3L22 4L17 22L2 19Z" fill="#6fb3c4" />
        <path d="M9 3L22 4L20 10Q13 10 6 13Z" fill="#b5dde4" />
        <path d="M22 4L23.500 6L19 23L3 20.500L2 19L17 22Z" fill="#d8ceb0" />
      </g>
    ),
  },
  {
    name: "chrome",
    width: "w-[44px] bg-[#474747]",
    state: "full",
    icon: (
      <g>
        <circle cx="13" cy="13" r="11" fill="#fff" />
        <path d="M13 13L3.500 7.500A11 11 0 0 1 22.500 7.500H13Z" fill="#e0402f" />
        <path d="M3.500 7.500A11 11 0 0 0 12 24L17 15L8.500 15.500Z" fill="#2ba14b" />
        <path d="M22.500 7.500A11 11 0 0 1 12 24L18 14L16 7.500Z" fill="#fbca3a" />
        <circle cx="13" cy="13" r="5.200" fill="#fff" />
        <circle cx="13" cy="13" r="4" fill="#4486f0" />
      </g>
    ),
  },
  {
    name: "acrobat",
    width: "w-[43px]",
    state: "",
    icon: (
      <g fill="none">
        <rect x="3" y="2.500" width="20" height="19" fill="#2a0b0b" stroke="#f02b1f" strokeWidth="1.600" />
        <path d="M7.500 17.500Q13 12.500 12.300 7Q13 4.500 13.500 7.500Q13.500 13 19 14.500Q20 15.500 17.500 15Q12.500 14.500 8.500 17.800Z" stroke="#fff" strokeWidth="1.200" />
      </g>
    ),
  },
  {
    name: "calendar",
    width: "w-[44px]",
    state: "",
    icon: (
      <g>
        <path d="M4 4H22.500V23.500H4Z" fill="none" stroke="#fff" strokeWidth="1.800" />
        <path d="M3 4H23.500V9H3ZM6 1H8V4H6ZM12 1H14V4H12ZM18 1H20V4H18Z" fill="#fff" />
        <path d="M10.500 12.500H20M7 16.500H20M7 20H16.500" stroke="#fff" strokeWidth="2" strokeDasharray="2 1.600" />
      </g>
    ),
  },
  {
    name: "github",
    width: "w-[42px]",
    state: "",
    icon: (
      <g>
        <circle cx="13" cy="13" r="11" fill="#f0ecf5" />
        <path d="M6 6.500L9.500 8Q13 7 16.500 8L20 6.500L20.500 11Q22 19 13 19.500Q4 19 5.500 11Z" fill="#4b2d73" />
      </g>
    ),
  },
  {
    name: "paint",
    width: "w-[42px]",
    state: "",
    icon: (
      <g>
        <rect x="3" y="1.500" width="18" height="22" fill="#e8eefa" />
        <rect x="4.500" y="3" width="15" height="10" fill="#2b57b5" />
        <path d="M4.500 10Q11 5 19.500 8" stroke="#7fa5e6" strokeWidth="2" fill="none" />
        <path d="M5 18H12M5 21H10" stroke="#6c83b8" strokeWidth="1.500" />
        <path d="M22.500 8L11 19" stroke="#c63b35" strokeWidth="2.200" />
      </g>
    ),
  },
  {
    name: "tools",
    width: "w-[44px]",
    state: "",
    icon: (
      <g fill="none">
        <rect x="3" y="1" width="6.500" height="9" rx="1.500" fill="#f3b51a" />
        <path d="M12 2H21V10M4 13V19H11" stroke="#3fae49" strokeWidth="1.200" strokeDasharray="1.500 1.500" />
        <path d="M11.500 23.500L22 13" stroke="#d0d6de" strokeWidth="2.400" />
        <path d="M11 13.500Q13 10 17 12L15 14.500L24 23" stroke="#aab4c4" strokeWidth="2.600" />
        <path d="M18.500 18L24 23.500" stroke="#4a74b8" strokeWidth="2.600" />
      </g>
    ),
  },
  { name: "excel", width: "w-[43px]", state: "", icon: <OfficeIcon letter="X" fill="#1e7145" /> },
  { name: "word", width: "w-[43px]", state: "line", icon: <OfficeIcon letter="W" fill="#2b5797" /> },
  {
    name: "outlook",
    width: "w-[44px]",
    state: "line",
    icon: (
      <g>
        <OfficeIcon letter="O" fill="#0072c6" />
        <rect x="12" y="15" width="14.500" height="10" fill="#eeb877" />
        <path d="M12 15.500L19 21L26.500 15.500" stroke="#fff" fill="none" />
      </g>
    ),
  },
  { name: "onenote", width: "w-[43px]", state: "", icon: <OfficeIcon letter="N" fill="#80397b" /> },
  {
    name: "map",
    width: "w-[43px]",
    state: "line",
    icon: (
      <g fill="none" stroke="#fff">
        <path d="M12.500 19Q5 13 5 8.500A7.500 7 0 0 1 20 8.500Q20 13 12.500 19Z" strokeWidth="3.200" />
        <circle cx="12.500" cy="8.500" r="3" strokeWidth="1.500" />
        <path d="M2 20.500H8.500M16.500 20.500H23M5.500 23.500H11M14 23.500H19.500" strokeWidth="2.600" />
      </g>
    ),
  },
];

function Taskbar() {
  return (
    <div className="flex h-[40px] shrink-0 bg-[#060606]">
      <div className="flex w-[48px] items-center justify-center">
        <svg width="16" height="16" className="fill-white">
          <path d="M0 2.300L6.800 1.300V7.500H0ZM7.800 1.200L16 0V7.500H7.800ZM0 8.500H6.800V14.700L0 13.700ZM7.800 8.500H16V16L7.800 14.800Z" />
        </svg>
      </div>
      <div className="flex w-[344px] items-center bg-[#333333] pl-[9px] text-[#9c9c9c]">
        <svg width="22" height="22">
          <circle cx="11" cy="11" r="9.300" fill="none" stroke="#fff" strokeWidth="2.600" />
        </svg>
        <span className="ml-[5px] text-[14px] tracking-[-0.070px] whitespace-nowrap">Type here to search</span>
        <svg width="12" height="17" className="mr-[15px] ml-auto" fill="none" stroke="#a0a0a0">
          <rect x="3.500" y=".5" width="5" height="10" rx="1.500" />
          <path d="M.8 8V10Q1 13.500 6 13.500T11.200 10V8M6 13.500V16.500M3 16.500H9" />
        </svg>
      </div>
      <div className="flex">
        {apps.map((a) => (
          <div key={a.name} className={"flex shrink-0 flex-col items-center justify-between pt-[7px] " + a.width}>
            <svg width="27" height="27" viewBox="-.5 0 27 27">{a.icon}</svg>
            {a.state === "line" && <span className="h-[3px] w-[35px] bg-[#f3b9a4]" />}
            {a.state === "full" && <span className="h-[3px] w-full bg-[#f3b9a4]" />}
          </div>
        ))}
      </div>
      <svg width="74" height="40" viewBox="1089 984 74 40" fill="none" stroke="#e8e8e8">
        <path d="M1098 1006.500L1103 1001.500L1108 1006.500" strokeWidth="1.400" />
        <path d="M1121 1007.500Q1118.500 1004 1122 1002.500Q1122.500 998.500 1126.500 998.500Q1129.500 998.500 1130.500 1001.500L1125 1003L1123 1007.500Z" fill="#fff" stroke="none" />
        <path d="M1125.500 1008Q1123.500 1005.500 1126.500 1004.500Q1128 1001.500 1131 1003Q1134 1003 1134 1005Q1136 1006 1134.500 1008Z" fill="#fff" stroke="none" />
        <path d="M1147 1010.500A10 10 0 0 1 1157.500 1000M1149.500 1011A8 8 0 0 1 1158 1003M1152.500 1011A5.500 5.500 0 0 1 1158 1006M1155.500 1011A2.500 2.500 0 0 1 1158 1009" stroke="#bbb" strokeWidth="1.200" />
      </svg>
      <div className="flex w-[64px] flex-col items-center pt-[1px] text-[11.400px] leading-[19px] tracking-[-0.150px] whitespace-nowrap text-white">
        <span>5:40 PM</span>
        <span>7/11/2017</span>
      </div>
      <svg width="50" height="40" viewBox="1227 984 50 40">
        <path d="M1239 996H1254V1008H1249L1246 1011V1008H1239Z" fill="#fff" />
        <path d="M1241.500 999.500H1251.500M1241.500 1002.500H1251.500M1241.500 1005.500H1248" stroke="#111" strokeWidth="1.200" />
        <circle cx="1251.500" cy="1008" r="3.800" fill="#060606" stroke="#ddd" />
        <path d="M1276.500 984V1024" stroke="#555" />
      </svg>
    </div>
  );
}

export default function App() {
  return (
    <div className="flex h-[1024px] w-[1280px] flex-col overflow-hidden font-['Open_Sans',sans-serif]">
      <TabStrip />
      <Toolbar />
      <Bookmarks />
      <div className="flex h-[894px] shrink-0">
        <div className="relative flex w-[1263px] flex-col">
          <StudioHeader />
          <div className="flex h-[775px] shrink-0">
            <NavRail />
            <Palette />
            <ExperimentCanvas />
            <PropertiesPanel />
          </div>
          <CommandBar />
          <ResultsDialog />
        </div>
        <div className="flex w-[17px] flex-col items-center justify-between bg-[#f1f1f1] py-[7px]">
          <Arrow dir="up" className="text-[#a3a3a3]" />
          <Arrow dir="down" className="text-[#a3a3a3]" />
        </div>
      </div>
      <Taskbar />
    </div>
  );
}
